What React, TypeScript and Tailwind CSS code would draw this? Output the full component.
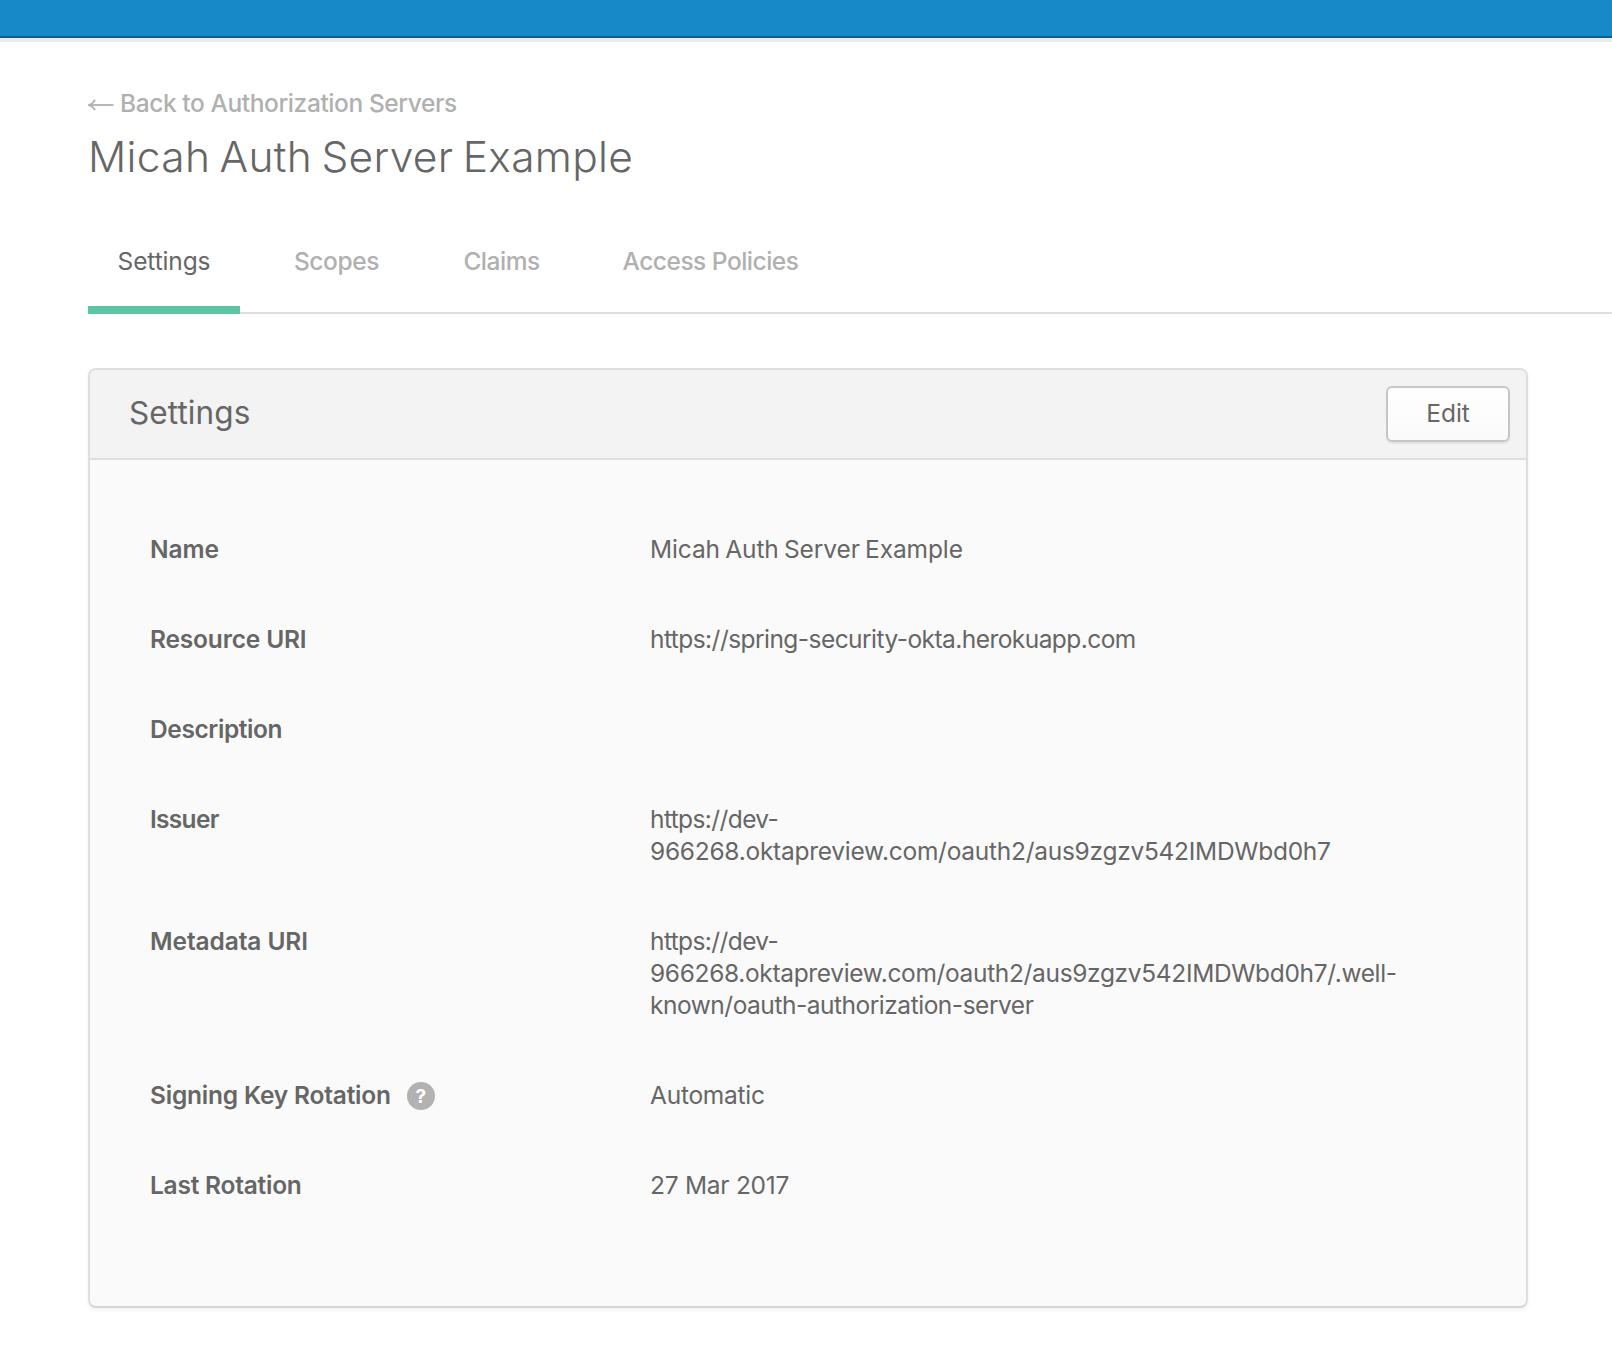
import type { ReactNode } from "react";

const TABS = [
  { label: "Settings", cls: "w-[152px] tracking-[-0.12px] border-[#5bc5a5] text-[#666666]" },
  { label: "Scopes", cls: "w-[147px] font-medium tracking-[-0.4px] border-transparent text-[#b0b0b0]" },
  { label: "Claims", cls: "w-[137px] font-medium tracking-[-0.5px] border-transparent text-[#b0b0b0]" },
  { label: "Access Policies", cls: "w-[235px] font-medium tracking-[-0.5px] border-transparent text-[#b0b0b0]" },
];

function BackArrow() {
  return (
    <svg className="mt-1 h-3 w-[26px]" viewBox="0 0 26 12" fill="none" stroke="currentColor" strokeWidth="1.8">
      <path d="M1.5 6H25.500" />
      <path d="M7 .8C5.600 3.500 3.600 5.200 .6 6C3.600 6.800 5.600 8.500 7 11.200" />
    </svg>
  );
}

function HelpBadge() {
  return (
    <span className="mt-0.5 ml-4 flex size-7 items-center justify-center rounded-full bg-[#b2b2b2] text-[19px] leading-none font-bold text-white">
      ?
    </span>
  );
}

function Row({ label, tracking, help, children }: { label: string; tracking: string; help?: boolean; children?: ReactNode }) {
  return (
    <div className="flex min-h-8">
      <dt className="flex h-8 w-[500px] shrink-0 items-center font-semibold">
        <span className={tracking}>{label}</span>
        {help && <HelpBadge />}
      </dt>
      <dd className="whitespace-nowrap">{children}</dd>
    </div>
  );
}

export default function App() {
  return (
    <div className="h-[1354px] w-[1612px] overflow-hidden bg-white font-['Inter',sans-serif] text-[24.5px] leading-8 text-[#666666]">
      <div className="h-[38px] border-b-2 border-[#115f8b] bg-[#1789c8]" />
      <div className="h-1 bg-[#ebebeb]" />

      <header className="pt-[45px] pl-[88px]">
        <a className="flex items-center gap-[6px] font-medium text-[#b0b0b0]">
          <BackArrow />
          <span className="tracking-[-0.41px]">Back to Authorization Servers</span>
        </a>
        <h1 className="mt-3 text-[42.5px] leading-[52px] font-light tracking-[0.31px] [word-spacing:-3px]">
          Micah Auth Server Example
        </h1>
        <nav className="mt-[62px] flex gap-[23px] border-b-2 border-[#dedede]">
          {TABS.map((t) => (
            <a key={t.label} className={`-mb-0.5 border-b-8 pb-[29px] text-center ${t.cls}`}>
              {t.label}
            </a>
          ))}
        </nav>
      </header>

      <section className="mt-[54px] ml-[88px] h-[940px] w-[1440px] overflow-hidden rounded-lg border-2 border-[#dfdfdf] border-b-[#d6d6d6] bg-[#fafafa] shadow-[0_2px_4px_rgba(0,0,0,0.06)]">
        <div className="flex h-[90px] items-center justify-between border-b-2 border-[#dfdfdf] bg-[#f3f3f3] pr-4 pl-10">
          <h2 className="-ml-px pb-[3px] text-[31.5px] font-normal tracking-[0.1px]">Settings</h2>
          <button className="h-14 w-[124px] rounded-md border-2 border-[#c6c6c6] bg-linear-to-b from-white to-[#fafafa] pb-0.5 shadow-[0_2px_1px_rgba(0,0,0,0.06)]">
            Edit
          </button>
        </div>
        <dl className="flex flex-col gap-[58px] pt-[73px] pl-[60px]">
          <Row label="Name" tracking="tracking-[-0.1px]">
            <span className="tracking-[-0.11px] [word-spacing:-1.5px]">Micah Auth Server Example</span>
          </Row>
          <Row label="Resource URI" tracking="tracking-[-0.17px]">
            <span className="tracking-[-0.55px]">https://spring-security-okta.herokuapp.com</span>
          </Row>
          <Row label="Description" tracking="tracking-[-0.4px]" />
          <Row label="Issuer" tracking="tracking-[-0.7px]">
            <span className="tracking-[-0.6px]">https://dev-</span>
            <br />
            <span className="tracking-[-0.27px]">966268.oktapreview.com/oauth2/aus9zgzv542IMDWbd0h7</span>
          </Row>
          <Row label="Metadata URI" tracking="tracking-[-0.1px]">
            <span className="tracking-[-0.6px]">https://dev-</span>
            <br />
            <span className="tracking-[-0.34px]">966268.oktapreview.com/oauth2/aus9zgzv542IMDWbd0h7/.well-</span>
            <br />
            <span className="tracking-[-0.48px]">known/oauth-authorization-server</span>
          </Row>
          <Row label="Signing Key Rotation" tracking="tracking-[-0.2px]" help>
            <span className="tracking-[-0.25px]">Automatic</span>
          </Row>
          <Row label="Last Rotation" tracking="tracking-[-0.23px]">
            <span className="tracking-[-0.26px]">27 Mar 2017</span>
          </Row>
        </dl>
      </section>
    </div>
  );
}
